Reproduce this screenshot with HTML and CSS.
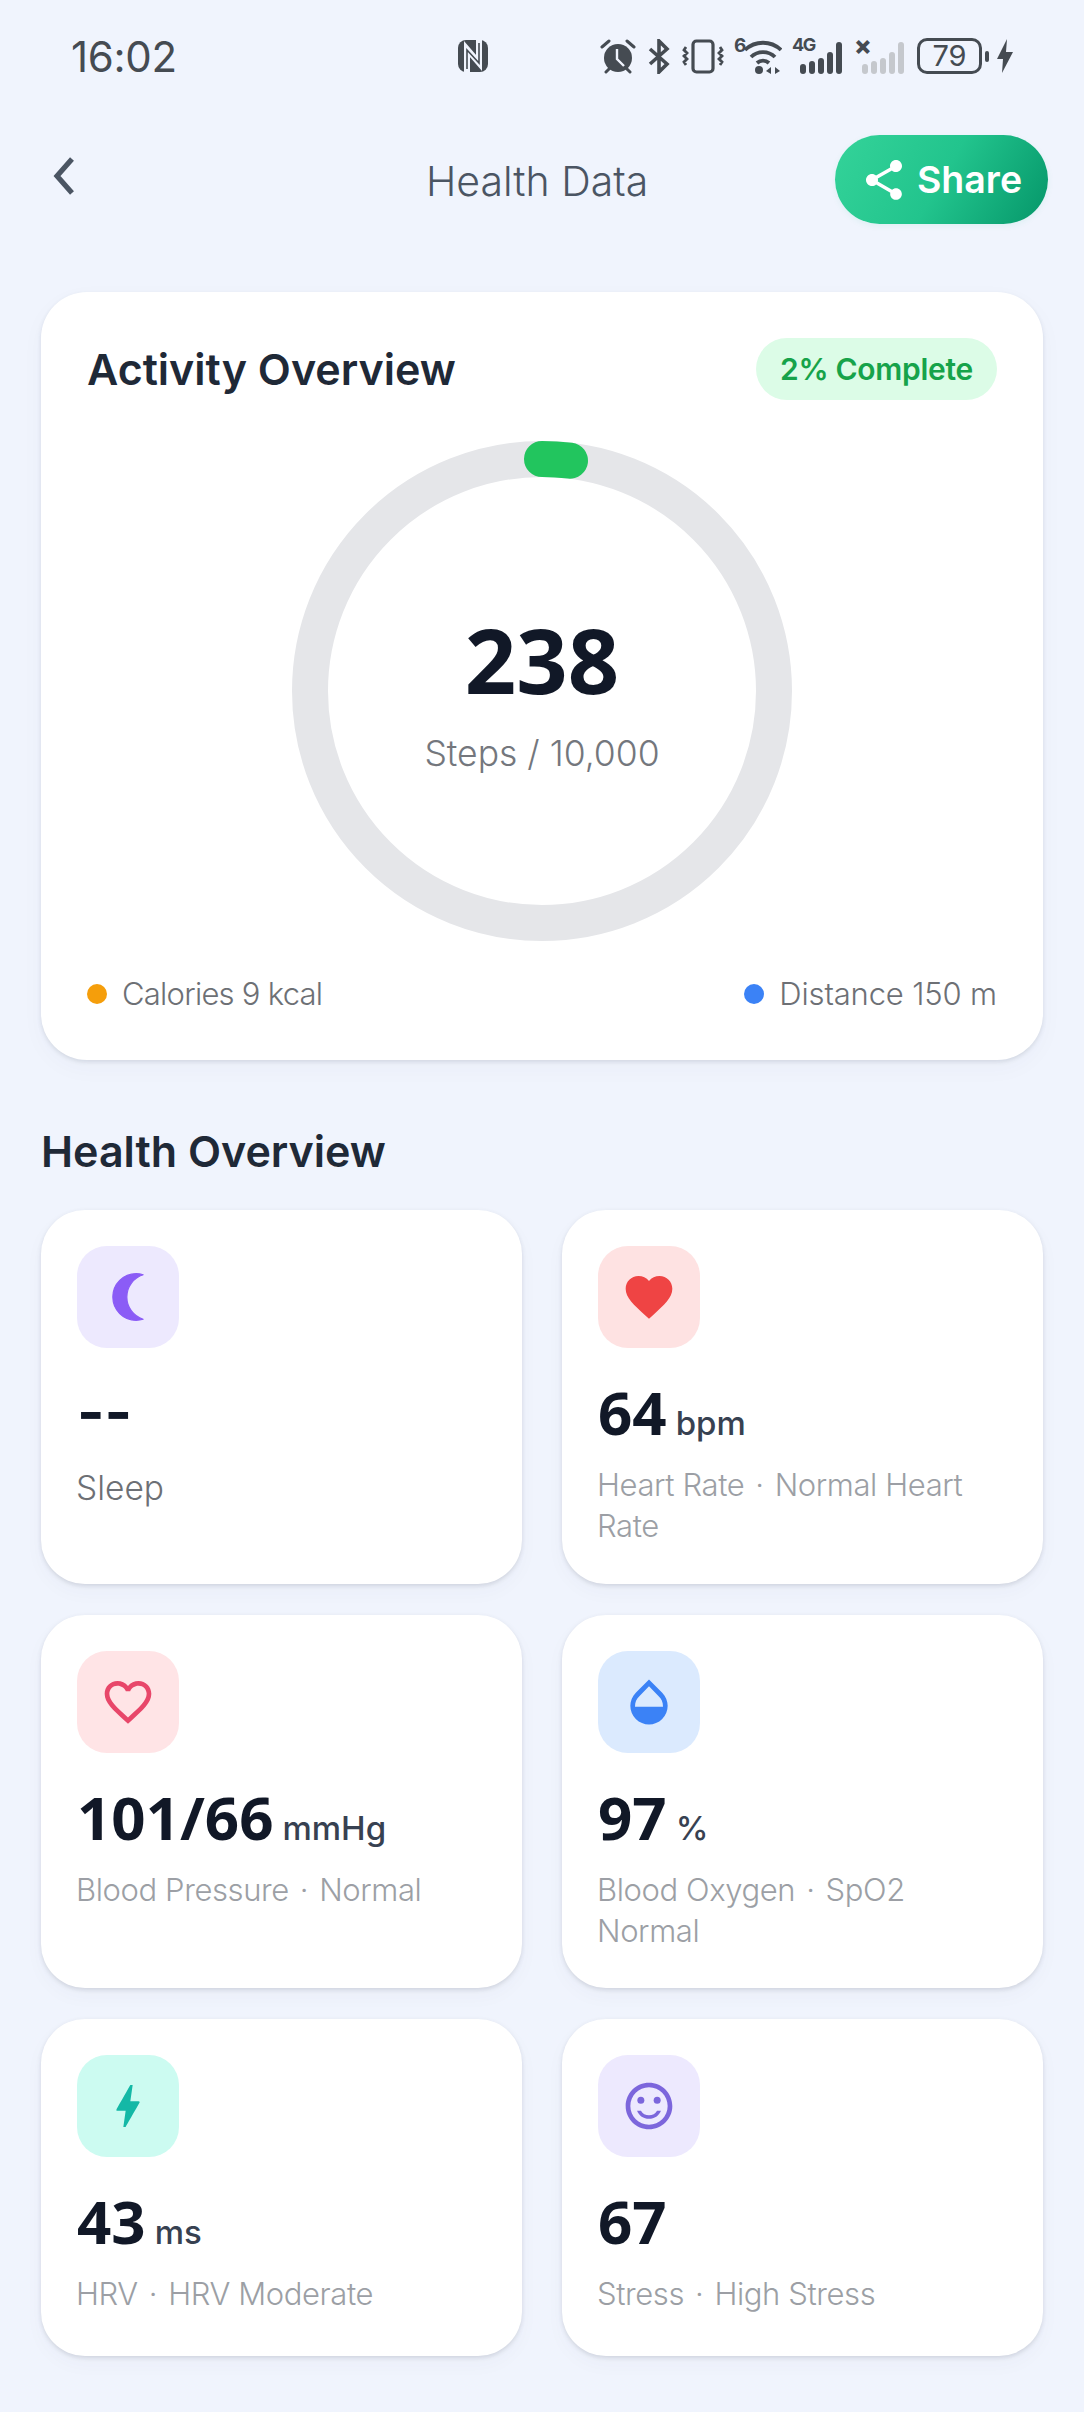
FILE: index.html
```html
<!DOCTYPE html>
<html lang="en">
<head>
<meta charset="utf-8">
<title>Health Data</title>
<link rel="stylesheet" href="styles.css">
</head>
<body>
<div class="status">
  <span class="time">16:02</span>
  <svg class="nfc" viewBox="0 0 30 32"><rect width="30" height="32" rx="8" fill="#454b52"/><path d="M9 33V9l12 14V-1" fill="none" stroke="#f0f4fd" stroke-width="6"/><path d="M9 29V10l12 13V3" fill="none" stroke="#454b52" stroke-width="1.6"/></svg>
  <div class="sys">
    <svg class="s-alarm" viewBox="0 0 36 35"><circle cx="18" cy="19" r="14" fill="#454b52"/><path d="M17 10v10l7 7" stroke="#f0f4fd" stroke-width="2.4" fill="none"/><path d="M2 8l7-6M34 8l-7-6M6 33l3-3M30 33l-3-3" stroke="#454b52" stroke-width="3" stroke-linecap="round"/></svg>
    <svg class="s-bt" viewBox="0 0 22 35"><path d="M2 10l17 15-8 8V2l8 8L2 25" fill="none" stroke="#454b52" stroke-width="3.6"/></svg>
    <svg class="s-vib" viewBox="0 0 42 35"><rect x="11" y="2" width="20" height="31" rx="3.5" fill="none" stroke="#454b52" stroke-width="3.2"/><path d="M4 8l-2 3 3 3-3 3 3 3-3 3 2 3M38 8l2 3-3 3 3 3-3 3 3 3-2 3" fill="none" stroke="#454b52" stroke-width="2.8"/></svg>
    <div class="wifi"><span class="s-six">6</span><svg viewBox="0 0 38 35"><path d="M1 11a26 26 0 0 1 36 0M7 18a17 17 0 0 1 24 0M13 24a9 9 0 0 1 12 0" fill="none" stroke="#454b52" stroke-width="3.8"/><circle cx="15" cy="31" r="4" fill="#454b52"/><path d="M22 32l5-4v7zM31 28l5 4-5 3z" fill="#454b52"/></svg></div>
    <div class="sig"><span class="s-4g">4G</span><svg viewBox="0 0 42 22"><g fill="#454b52"><rect x="0" y="12" width="6" height="10" rx="3"/><rect x="9" y="9" width="6" height="13" rx="3"/><rect x="18" y="6" width="6" height="16" rx="3"/><rect x="27" y="0" width="6" height="22" rx="3"/><rect x="36" y="-10" width="6" height="32" rx="3"/></g></svg></div>
    <div class="sig sig-off"><span class="s-x">×</span><svg viewBox="0 0 42 22"><g fill="#c5c8cd"><rect x="0" y="12" width="6" height="10" rx="3"/><rect x="9" y="9" width="6" height="13" rx="3"/><rect x="18" y="6" width="6" height="16" rx="3"/><rect x="27" y="0" width="6" height="22" rx="3"/><rect x="36" y="-10" width="6" height="32" rx="3"/></g></svg></div>
    <div class="batt"><span class="batt-n">79</span></div>
    <span class="batt-nub"></span>
    <svg class="s-bolt" viewBox="0 0 16 34"><path d="M10 0L0 20h6l-1 14L16 13H9z" fill="#454b52"/></svg>
  </div>
</div>

<header class="nav">
  <button class="back" aria-label="Back"><svg viewBox="0 0 24 40"><path d="M20 3L5 20l15 17" fill="none" stroke="#4b5563" stroke-width="5.2"/></svg></button>
  <h1 class="nav-title">Health Data</h1>
  <button class="share"><svg viewBox="0 0 24 24"><path fill="#fff" d="M18 16.08c-.76 0-1.44.3-1.96.77L8.91 12.7c.05-.23.09-.46.09-.7s-.04-.47-.09-.7l7.05-4.11c.54.5 1.25.81 2.04.81 1.66 0 3-1.34 3-3s-1.34-3-3-3-3 1.34-3 3c0 .24.04.47.09.7L8.04 9.81C7.5 9.31 6.79 9 6 9c-1.66 0-3 1.34-3 3s1.34 3 3 3c.79 0 1.5-.31 2.04-.81l7.12 4.16c-.05.21-.08.43-.08.65 0 1.61 1.31 2.92 2.92 2.92 1.61 0 2.92-1.31 2.92-2.92s-1.31-2.92-2.92-2.92z"/></svg>Share</button>
</header>

<main class="content">
  <section class="activity">
    <div class="activity-head">
      <h2 class="heading">Activity Overview</h2>
      <span class="badge">2% Complete</span>
    </div>
    <div class="ring">
      <svg viewBox="0 0 500 500">
        <circle cx="250" cy="250" r="232" fill="none" stroke="#e5e6e9" stroke-width="36"/>
        <path d="M250 18A232 232 0 0 1 278 19.7" fill="none" stroke="#22c55e" stroke-width="36" stroke-linecap="round"/>
      </svg>
      <div class="ring-text">
        <div class="steps">238</div>
        <div class="steps-sub">Steps / 10,000</div>
      </div>
    </div>
    <div class="legend">
      <span class="legend-item legend-cal"><i class="dot dot-amber"></i>Calories 9 kcal</span>
      <span class="legend-item"><i class="dot dot-blue"></i>Distance 150 m</span>
    </div>
  </section>

  <h2 class="heading section-title">Health Overview</h2>

  <div class="grid">
    <article class="card">
      <div class="icon bg-violet"><svg viewBox="0 0 24 24"><path fill="#8b5cf6" stroke="#8b5cf6" stroke-width=".5" stroke-linejoin="round" d="M15.5 22c1.05 0 2.05-.16 3-.46-4.06-1.27-7-5.06-7-9.54s2.94-8.27 7-9.54c-.95-.3-1.95-.46-3-.46-5.52 0-10 4.48-10 10s4.48 10 10 10z"/></svg></div>
      <div class="value value-empty">--</div>
      <div class="label-dark">Sleep</div>
    </article>
    <article class="card">
      <div class="icon bg-red"><svg viewBox="0 0 24 24"><path fill="#ef4444" d="M12 21.35l-1.45-1.32C5.4 15.36 2 12.28 2 8.5 2 5.42 4.42 3 7.5 3c1.74 0 3.41.81 4.5 2.09C13.09 3.81 14.76 3 16.5 3 19.58 3 22 5.42 22 8.5c0 3.78-3.4 6.86-8.55 11.54L12 21.35z"/></svg></div>
      <div class="value">64<span class="unit">bpm</span></div>
      <div class="label">Heart Rate<span class="sep">·</span>Normal Heart Rate</div>
    </article>
    <article class="card">
      <div class="icon bg-rose"><svg viewBox="0 0 24 24"><path fill="#e8476a" d="M16.5 3c-1.74 0-3.41.81-4.5 2.09C10.91 3.81 9.24 3 7.5 3 4.42 3 2 5.42 2 8.5c0 3.78 3.4 6.86 8.55 11.54L12 21.35l1.45-1.32C18.6 15.36 22 12.28 22 8.5 22 5.42 19.58 3 16.5 3zm-4.4 15.55l-.1.1-.1-.1C7.14 14.24 4 11.39 4 8.5 4 6.5 5.5 5 7.5 5c1.54 0 3.04.99 3.57 2.36h1.87C13.46 5.99 14.96 5 16.5 5c2 0 3.5 1.5 3.5 3.5 0 2.89-3.14 5.74-7.9 10.05z"/></svg></div>
      <div class="value">101/66<span class="unit">mmHg</span></div>
      <div class="label">Blood Pressure<span class="sep">·</span>Normal</div>
    </article>
    <article class="card">
      <div class="icon bg-blue"><svg viewBox="0 0 24 24"><path fill="#3b82f6" d="M17.66 8L12 2.35 6.34 8C4.78 9.56 4 11.64 4 13.64s.78 4.11 2.34 5.67 3.61 2.35 5.66 2.35 4.1-.79 5.66-2.35S20 15.64 20 13.64 19.22 9.56 17.66 8zM6 14c.01-2 .62-3.27 1.76-4.4L12 5.27l4.24 4.38C17.38 10.77 17.99 12 18 14H6z"/></svg></div>
      <div class="value">97<span class="unit">%</span></div>
      <div class="label">Blood Oxygen<span class="sep">·</span>SpO2 Normal</div>
    </article>
    <article class="card">
      <div class="icon bg-teal"><svg viewBox="0 0 24 24"><path fill="#14b8a6" d="M11 21h-1l1-7H7.5c-.58 0-.57-.32-.38-.66.19-.34.05-.08.07-.12C8.48 10.94 10.42 7.54 13 3h1l-1 7h3.5c.49 0 .56.33.47.51l-.07.15C12.96 17.55 11 21 11 21z"/></svg></div>
      <div class="value">43<span class="unit">ms</span></div>
      <div class="label">HRV<span class="sep">·</span>HRV Moderate</div>
    </article>
    <article class="card">
      <div class="icon bg-violet"><svg viewBox="0 0 24 24"><g fill="#7c66dc"><path d="M11.99 2C6.47 2 2 6.48 2 12s4.47 10 9.99 10C17.52 22 22 17.52 22 12S17.52 2 11.99 2zM12 20c-4.42 0-8-3.58-8-8s3.58-8 8-8 8 3.58 8 8-3.58 8-8 8z"/><circle cx="15.5" cy="9.5" r="1.5"/><circle cx="8.5" cy="9.5" r="1.5"/><path d="M12 16c-1.48 0-2.75-.81-3.45-2H6.88c.8 2.05 2.79 3.5 5.12 3.5s4.32-1.45 5.12-3.5h-1.67c-.7 1.19-1.97 2-3.45 2z"/></g></svg></div>
      <div class="value">67</div>
      <div class="label">Stress<span class="sep">·</span>High Stress</div>
    </article>
  </div>
</main>
</body>
</html>
```

FILE: styles.css
```css
* { box-sizing: border-box; }
html, body { margin: 0; padding: 0; }
body {
  width: 1084px;
  height: 2412px;
  overflow: hidden;
  background: #f0f4fd;
  font-family: Inter, "Liberation Sans", sans-serif;
  color: #111827;
}
h1, h2 { margin: 0; }
button { border: 0; background: none; padding: 0; font-family: inherit; }

/* status bar */
.status {
  height: 112px;
  padding: 0 71px;
  display: flex;
  align-items: center;
  color: #454b52;
}
.time { font-size: 42px; font-weight: 400; width: 387px; letter-spacing: -0.3px; }
.nfc { width: 30px; height: 32px; }
.sys { margin-left: 112px; display: flex; align-items: center; height: 36px; }
.s-alarm { width: 36px; height: 35px; }
.s-bt { width: 22px; height: 35px; margin-left: 12px; }
.s-vib { width: 42px; height: 35px; margin-left: 12px; }
.wifi { position: relative; width: 48px; height: 35px; margin-left: 10px; }
.wifi svg { position: absolute; right: 0; top: 0; width: 38px; height: 35px; }
.s-six { position: absolute; left: 0; top: -3px; font-size: 19px; font-weight: 700; line-height: 20px; }
.sig { position: relative; width: 42px; height: 35px; margin-left: 18px; }
.sig svg { position: absolute; left: 0; top: 13px; width: 42px; height: 22px; overflow: visible; }
.sig-off { margin-left: 20px; }
.s-4g { position: absolute; left: -8px; top: -4px; font-size: 18px; font-weight: 700; line-height: 20px; letter-spacing: -1.5px; }
.s-x { position: absolute; left: -8px; top: -4px; font-size: 26px; font-weight: 800; line-height: 22px; }
.batt {
  width: 65px; height: 36px; margin-left: 13px;
  border: 3px solid #454b52; border-radius: 10px;
  display: flex; align-items: center; justify-content: center;
}
.batt-n { font-size: 29px; line-height: 30px; font-weight: 400; }
.batt-nub { width: 4px; height: 11px; margin-left: 3px; background: #454b52; border-radius: 2px; }
.s-bolt { width: 16px; height: 34px; margin-left: 8px; }

/* nav */
.nav {
  margin-top: 23px;
  height: 89px;
  padding: 0 36px 0 52px;
  display: flex;
  align-items: center;
  justify-content: space-between;
  position: relative;
}
.back { width: 24px; height: 40px; margin-top: -8px; }
.back svg { display: block; width: 24px; height: 40px; }
.nav-title {
  position: absolute;
  left: 426px;
  top: 20px;
  font-size: 41px;
  line-height: 52px;
  font-weight: 300;
  color: #4b5563;
}
.share {
  width: 213px;
  height: 89px;
  border-radius: 45px;
  background: linear-gradient(120deg, #34d399 0%, #22c48d 50%, #059669 100%);
  color: #fff;
  font-size: 37.5px;
  font-weight: 600;
  display: flex;
  align-items: center;
  justify-content: center;
  gap: 9px;
  padding-left: 3px;
  box-shadow: 0 2px 6px rgba(16, 185, 129, 0.08);
}
.share svg { width: 48px; height: 48px; margin-left: -4px; }

/* content */
.content { padding: 68px 41px 0; }
.activity {
  background: #fff;
  border-radius: 46px;
  padding: 46px;
  box-shadow: 0 2px 4px rgba(60, 70, 90, 0.14), 0 8px 24px rgba(60, 70, 90, 0.03);
}
.activity-head { display: flex; align-items: center; justify-content: space-between; }
.heading { font-size: 43px; line-height: 52px; font-weight: 600; color: #1f2937; }
.badge {
  width: 241px; height: 62px;
  border-radius: 31px;
  background: #dcfce7;
  color: #16a34a;
  font-size: 30px;
  font-weight: 600;
  letter-spacing: -0.3px;
  display: flex; align-items: center; justify-content: center;
}
.ring { position: relative; width: 500px; height: 500px; margin: 41px auto 0; }
.ring svg { display: block; width: 500px; height: 500px; }
.ring-text {
  position: absolute; inset: 0;
  display: flex; flex-direction: column; align-items: center; justify-content: center;
}
.steps { font-family: "Noto Sans", sans-serif; font-size: 90px; line-height: 100px; font-weight: 700; color: #111827; margin-top: 4px; }
.steps-sub { font-size: 35.5px; line-height: 46px; font-weight: 300; color: #74777d; margin-top: 22px; }
.legend { display: flex; justify-content: space-between; margin-top: 33px; }
.legend-item { display: flex; align-items: center; gap: 15px; font-size: 31px; line-height: 40px; font-weight: 300; color: #6d7075; letter-spacing: -0.15px; }
.legend-cal { letter-spacing: -0.75px; }
.dot { width: 20px; height: 20px; border-radius: 50%; }
.dot-amber { background: #f59e0b; }
.dot-blue { background: #3b82f6; }

.section-title { margin-top: 65px; color: #1f2937; }

.grid {
  margin-top: 33px;
  display: grid;
  grid-template-columns: 481px 481px;
  grid-template-rows: 374px 373px 337px;
  column-gap: 40px;
  row-gap: 31px;
}
.card {
  background: #fff;
  border-radius: 44px;
  padding: 36px 36px 0;
  box-shadow: 0 2px 4px rgba(60, 70, 90, 0.16), 0 8px 20px rgba(60, 70, 90, 0.03);
}
.icon {
  width: 102px; height: 102px;
  border-radius: 30px;
  display: flex; align-items: center; justify-content: center;
}
.icon svg { width: 56px; height: 56px; }
.bg-violet { background: #ede9fe; }
.bg-red { background: #fee2e2; }
.bg-rose { background: #ffe4e6; }
.bg-blue { background: #dbeafe; }
.bg-teal { background: #ccfbf1; }
.value {
  margin-top: 26px;
  font-family: "Noto Sans", sans-serif;
  font-size: 60px;
  line-height: 76px;
  font-weight: 700;
  color: #111827;
}
.value-empty { font-family: Inter, sans-serif; font-size: 59px; }
.unit { font-family: Inter, sans-serif; font-size: 33px; line-height: 1; font-weight: 500; color: #374151; margin-left: 9px; }
.label { margin-top: 14px; margin-left: -1px; font-size: 31px; line-height: 41px; font-weight: 300; color: #9c9fa5; letter-spacing: -0.4px; }
.label-dark { margin-top: 16px; margin-left: -1px; font-size: 33.5px; line-height: 44px; font-weight: 300; color: #6d7075; }
.sep { margin: 0 11px; }
```
